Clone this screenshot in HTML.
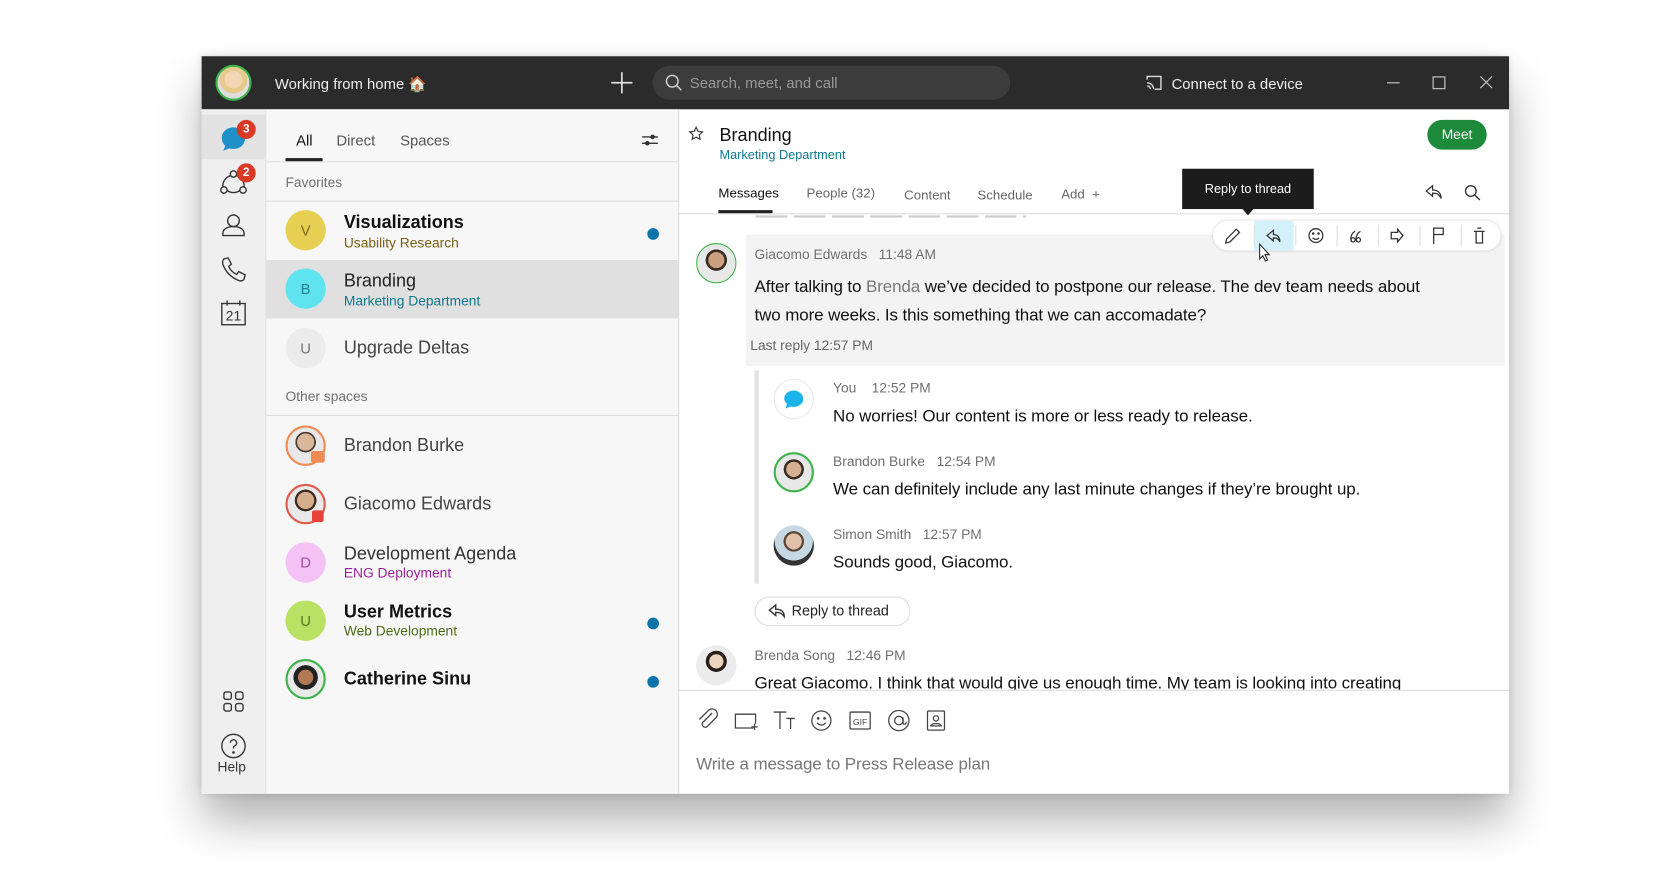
<!DOCTYPE html>
<html><head><meta charset="utf-8">
<style>
*{box-sizing:border-box;margin:0;padding:0}
html,body{width:1664px;height:880px;background:#fff;overflow:hidden;font-family:"Liberation Sans",sans-serif;color:#121212}
#w{position:absolute;left:0;top:0;width:1568px;height:830px;transform:scale(1.0612);transform-origin:0 0}
.a{position:absolute}
.win{left:190px;top:53px;width:1232px;height:695px;background:#fff;box-shadow:0 26px 40px rgba(0,0,0,.3),0 0 8px rgba(0,0,0,.14)}
.tb{left:190px;top:53px;width:1232px;height:50px;background:#2b2b2b}
.rail{left:190px;top:103px;width:61px;height:645px;background:#efefef;border-right:1px solid #e2e2e2}
.list{left:251px;top:103px;width:389px;height:645px;background:#f7f7f7;border-right:1px solid #ddd}
.av{width:38px;height:38px;border-radius:50%;text-align:center;line-height:38px;font-size:14px;color:#555}
.row{position:absolute;left:251px;width:388px;height:55px}
.nm{position:absolute;left:73px;font-size:17px;color:#222}
.sub{position:absolute;left:73px;font-size:13px}
.dot{position:absolute;left:359px;width:11px;height:11px;border-radius:50%;background:#0a73a8}
.g{color:#707070}
.m{font-size:16px;letter-spacing:-0.1px}
svg{position:absolute;overflow:visible}
</style></head><body><div id="w">
<div class="a win"></div>
<div class="a tb"></div>
<div class="a" style="left:203px;top:61px;width:34px;height:34px;border-radius:50%;border:2px solid #3cb44b;background:radial-gradient(circle at 50% 40%,#f3d7b5 0 35%,#e8c98c 36% 55%,#ddd 56%)"></div>
<div class="a" style="left:259px;top:71px;color:#eee;font-size:14px">Working from home 🏠</div>
<svg style="left:576px;top:68px" width="20" height="20"><path d="M10 0V20M0 10H20" stroke="#ddd" stroke-width="1.6"/></svg>
<div class="a" style="left:615px;top:62px;width:337px;height:32px;border-radius:16px;background:#3c3c3c"></div>
<svg style="left:627px;top:70px" width="16" height="16"><circle cx="6.5" cy="6.5" r="5.5" fill="none" stroke="#ccc" stroke-width="1.4"/><path d="M10.5 10.5L15 15" stroke="#ccc" stroke-width="1.4"/></svg>
<div class="a" style="left:650px;top:70px;color:#9a9a9a;font-size:14px">Search, meet, and call</div>
<svg style="left:1080px;top:71px" width="15" height="14"><path d="M1 4V1H14V13H8" fill="none" stroke="#ddd" stroke-width="1.3"/><path d="M1 7A6 6 0 0 1 7 13M1 10A3 3 0 0 1 4 13" fill="none" stroke="#ddd" stroke-width="1.3"/></svg>
<div class="a" style="left:1104px;top:71px;color:#eee;font-size:14px">Connect to a device</div>
<svg style="left:1306px;top:70px" width="110" height="16"><path d="M1 8H13" stroke="#bbb" stroke-width="1.2"/><rect x="44.5" y="2.5" width="11" height="11" fill="none" stroke="#bbb" stroke-width="1.2"/><path d="M89 2L100 13M100 2L89 13" stroke="#bbb" stroke-width="1.2"/></svg>
<div class="a rail"></div>
<div class="a" style="left:190px;top:108px;width:60px;height:42px;background:#e2e2e2"></div>
<svg style="left:207px;top:118px" width="26" height="26"><path d="M13 2C6.5 2 2 6.5 2 12c0 3 1.3 5.5 3.3 7.3L3.5 24l5.6-2.2c1.2.3 2.5.5 3.9.5 6.5 0 11-4.5 11-10.3S19.5 2 13 2z" fill="#1e8fc9"/></svg>
<div class="a" style="left:223px;top:113px;width:18px;height:18px;border-radius:50%;background:#d93a26;color:#fff;font-size:11px;font-weight:bold;text-align:center;line-height:18px">3</div>
<svg style="left:207px;top:160px" width="26" height="24" fill="none" stroke="#333" stroke-width="1.3"><circle cx="13" cy="4" r="3"/><circle cx="4" cy="19" r="3"/><circle cx="22" cy="19" r="3"/><path d="M10.5 5.5A10 10 0 0 0 3 16M7 19.5a10 10 0 0 0 12 0M15.5 5.5A10 10 0 0 1 23 16"/></svg>
<div class="a" style="left:223px;top:154px;width:18px;height:18px;border-radius:50%;background:#d93a26;color:#fff;font-size:11px;font-weight:bold;text-align:center;line-height:18px">2</div>
<svg style="left:209px;top:201px" width="22" height="22" fill="none" stroke="#333" stroke-width="1.3"><circle cx="11" cy="7" r="5.5"/><path d="M1 21v-2c0-4 4-6.5 10-6.5s10 2.5 10 6.5v2z"/></svg>
<svg style="left:208px;top:242px" width="24" height="24" fill="none" stroke="#333" stroke-width="1.3"><path d="M3 2l4-1 3 6-2.5 2c1.5 3.5 4 6 7.5 7.5L17 14l6 3-1 4c-1 1.5-3 2-5 1.3C10 19.5 4.5 14 2 7 1.5 5 2 3 3 2z"/></svg>
<svg style="left:208px;top:283px" width="24" height="24"><rect x="1" y="3" width="22" height="20" fill="none" stroke="#333" stroke-width="1.3"/><path d="M6 0V5M18 0V5" stroke="#333" stroke-width="1.3"/><text x="12" y="19" font-size="13" text-anchor="middle" font-family="Liberation Sans" fill="#333">21</text></svg>
<svg style="left:210px;top:651px" width="20" height="20" fill="none" stroke="#333" stroke-width="1.3"><rect x="1" y="1" width="7" height="7" rx="2"/><rect x="12" y="1" width="7" height="7" rx="2"/><rect x="1" y="12" width="7" height="7" rx="2"/><rect x="12" y="12" width="7" height="7" rx="2"/></svg>
<svg style="left:208px;top:691px" width="24" height="24" fill="none" stroke="#333" stroke-width="1.3"><circle cx="12" cy="12" r="11"/><path d="M9 9a3 3 0 1 1 4 3c-1 .5-1 1-1 2.5"/><circle cx="12" cy="18" r=".6" fill="#333"/></svg>
<div class="a" style="left:205px;top:715px;font-size:13px;color:#333">Help</div>
<div class="a list"></div>
<div class="a" style="left:279px;top:124px;font-size:14px;color:#111">All</div>
<div class="a" style="left:317px;top:124px;font-size:14px;color:#555">Direct</div>
<div class="a" style="left:377px;top:124px;font-size:14px;color:#555">Spaces</div>
<div class="a" style="left:269px;top:149px;width:35px;height:3px;background:#222"></div>
<div class="a" style="left:251px;top:152px;width:388px;height:1px;background:#ddd"></div>
<svg style="left:605px;top:126px" width="15" height="12" stroke="#333" stroke-width="1.3"><path d="M0 3H15M0 9H15"/><circle cx="10" cy="3" r="1.5" fill="#333"/><circle cx="5" cy="9" r="1.5" fill="#333"/></svg>
<div class="a g" style="left:269px;top:164px;font-size:13px">Favorites</div>
<div class="a" style="left:251px;top:189px;width:388px;height:1px;background:#ddd"></div>
<div class="row" style="top:190px"><div class="a av" style="left:18px;top:8px;background:#e6cf52;color:#7a6a20">V</div><div class="nm" style="top:10px;font-weight:bold;color:#111">Visualizations</div><div class="sub" style="top:31px;color:#7a5e13">Usability Research</div><div class="dot" style="top:25px"></div></div>
<div class="row" style="top:245px;background:#e0e0e0"><div class="a av" style="left:18px;top:8px;background:#5fe3ef;color:#2a7e88">B</div><div class="nm" style="top:10px">Branding</div><div class="sub" style="top:31px;color:#0b7a8c">Marketing Department</div></div>
<div class="row" style="top:300px"><div class="a av" style="left:18px;top:9px;background:#ececec;color:#777">U</div><div class="nm" style="top:18px;color:#444">Upgrade Deltas</div></div>
<div class="a g" style="left:269px;top:366px;font-size:13px">Other spaces</div>
<div class="a" style="left:251px;top:391px;width:388px;height:1px;background:#ddd"></div>
<div class="row" style="top:392px"><div class="a av" style="left:18px;top:9px;border:2px solid #f08a54;background:radial-gradient(circle at 50% 40%,#d8b79a 0 30%,#4a3a30 31% 36%,#e9e9e9 37%)"></div><div class="a" style="left:42px;top:33px;width:13px;height:11px;background:#f08a54;border-radius:2px"></div><div class="nm" style="top:18px;color:#444">Brandon Burke</div></div>
<div class="row" style="top:447px"><div class="a av" style="left:18px;top:9px;border:2px solid #e05a4a;background:radial-gradient(circle at 50% 40%,#d6ae8e 0 30%,#3a2a20 31% 38%,#e9e9e9 39%)"></div><div class="a" style="left:43px;top:34px;width:11px;height:11px;background:#e8433a;border-radius:2px"></div><div class="nm" style="top:18px;color:#444">Giacomo Edwards</div></div>
<div class="row" style="top:502px"><div class="a av" style="left:18px;top:9px;background:#f4c2f4;color:#a050a0">D</div><div class="nm" style="top:10px;color:#333">Development Agenda</div><div class="sub" style="top:30px;color:#9b1f9b">ENG Deployment</div></div>
<div class="row" style="top:557px"><div class="a av" style="left:18px;top:9px;background:#b9e163;color:#5c7a20">U</div><div class="nm" style="top:10px;font-weight:bold;color:#111">User Metrics</div><div class="sub" style="top:30px;color:#4f6a17">Web Development</div><div class="dot" style="top:25px"></div></div>
<div class="row" style="top:612px"><div class="a av" style="left:18px;top:9px;border:2px solid #3cb44b;background:radial-gradient(circle at 50% 45%,#b07a55 0 28%,#222 29% 45%,#e9e9e9 46%)"></div><div class="nm" style="top:18px;font-weight:bold;color:#111">Catherine Sinu</div><div class="dot" style="top:25px"></div></div>
<svg style="left:649px;top:119px" width="14" height="14"><path d="M7 1l1.8 3.8 4.2.5-3.1 2.9.8 4.1L7 10.3 3.3 12.3l.8-4.1L1 5.3l4.2-.5z" fill="none" stroke="#333" stroke-width="1.1"/></svg>
<div class="a" style="left:678px;top:118px;font-size:17px;color:#111">Branding</div>
<div class="a" style="left:678px;top:139px;font-size:12px;color:#0b7a8c">Marketing Department</div>
<div class="a" style="left:1345px;top:113px;width:56px;height:28px;border-radius:14px;background:#1d8a3b;color:#fff;font-size:13px;text-align:center;line-height:28px">Meet</div>
<div class="a" style="left:677px;top:175px;font-size:12.5px;color:#111">Messages</div>
<div class="a" style="left:760px;top:175px;font-size:12.5px;color:#666">People (32)</div>
<div class="a" style="left:852px;top:177px;font-size:12.5px;color:#666">Content</div>
<div class="a" style="left:921px;top:177px;font-size:12.5px;color:#666">Schedule</div>
<div class="a" style="left:1000px;top:176px;font-size:12.5px;color:#666">Add &nbsp;+</div>
<div class="a" style="left:677px;top:198px;width:51px;height:3px;background:#222"></div>
<div class="a" style="left:640px;top:201px;width:782px;height:1px;background:#ddd"></div>
<svg style="left:1343px;top:174px" width="16" height="15" fill="none" stroke="#333" stroke-width="1.2"><path d="M7 1L1 6l6 5V8c4 0 6 1 8 5 0-5-3-8-8-8z"/></svg>
<svg style="left:1380px;top:174px" width="15" height="15" fill="none" stroke="#333" stroke-width="1.3"><circle cx="6" cy="6" r="5"/><path d="M10 10l4.5 4.5"/></svg>
<div class="a" style="left:1114px;top:159px;width:124px;height:38px;background:#1c1c1c;color:#fff;font-size:12px;text-align:center;line-height:38px">Reply to thread</div>
<div class="a" style="left:1170px;top:196px;border-left:6px solid transparent;border-right:6px solid transparent;border-top:7px solid #1c1c1c;width:0;height:0"></div>
<div class="a" style="left:712px;top:203px;width:255px;height:2px;background:repeating-linear-gradient(90deg,#ccc 0 30px,transparent 30px 36px)"></div>
<div class="a" style="left:703px;top:221px;width:715px;height:124px;background:#f3f3f3"></div>
<div class="a av" style="left:656px;top:229px;border:1.5px solid #3cb44b;background:radial-gradient(circle at 50% 42%,#caa080 0 27%,#3b2c22 28% 36%,#e8e8e8 37%)"></div>
<div class="a" style="left:711px;top:232px;font-size:13px;color:#707070">Giacomo Edwards&nbsp;&nbsp;&nbsp;11:48 AM</div>
<div class="a m" style="left:711px;top:257px;line-height:27px;color:#111;width:655px">After talking to <span style="color:#777">Brenda</span> we’ve decided to postpone our release. The dev team needs about two more weeks. Is this something that we can accomadate?</div>
<div class="a" style="left:707px;top:318px;font-size:13px;color:#666">Last reply 12:57 PM</div>
<div class="a" style="left:1143px;top:208px;width:271px;height:28px;background:#fff;border-radius:14px;box-shadow:0 0 3px rgba(0,0,0,.2)"></div>
<div class="a" style="left:1182px;top:208px;width:37px;height:28px;background:#d4f1fb"></div>
<svg style="left:1143px;top:208px" width="271" height="28" fill="none" stroke="#333" stroke-width="1.2">
<path d="M39 4V24M78 4V24M117 4V24M156 4V24M195 4V24M234 4V24" stroke="#e3e3e3"/>
<path d="M12 21l1-4 9-9 3 3-9 9z"/>
<path d="M57 9l-6 5 6 5v-3c3 0 5 1 6 4 0-4-2-7-6-7z"/>
<circle cx="97" cy="14" r="6.5"/><circle cx="94.5" cy="12" r=".6" fill="#333"/><circle cx="99.5" cy="12" r=".6" fill="#333"/><path d="M94 16a3.5 3 0 0 0 6 0"/>
<path d="M131 20c-2-3-1-8 3-10M136 20c-2-3-1-8 3-10"/><circle cx="132" cy="18" r="2"/><circle cx="137" cy="18" r="2"/>
<path d="M168 11h6V8l5 6-5 6v-3h-6z"/>
<path d="M208 22V7h9v6h-9"/>
<path d="M246 10h10M248 10v11h6V10M249 7h4"/>
</svg>
<svg style="left:1186px;top:229px" width="12" height="18"><path d="M1 1v14l3-3 2.5 5 2-1-2.5-5h4z" fill="#fff" stroke="#222" stroke-width="1"/></svg>
<div class="a" style="left:711px;top:349px;width:4px;height:201px;background:#e3e3e3"></div>
<div class="a av" style="left:729px;top:357px;background:#fff;border:1px solid #e8e8e8"></div>
<svg style="left:738px;top:367px" width="20" height="19"><path d="M10 1C5 1 1 4.5 1 8.5c0 2 1 3.8 2.5 5L2.5 18l4.5-2c1 .3 2 .4 3 .4 5 0 9-3.3 9-7.4S15 1 10 1z" fill="#1ab4ea"/></svg>
<div class="a" style="left:785px;top:358px;font-size:13px;color:#707070">You&nbsp;&nbsp;&nbsp;&nbsp;12:52 PM</div>
<div class="a m" style="left:785px;top:384px">No worries! Our content is more or less ready to release.</div>
<div class="a av" style="left:729px;top:426px;border:2px solid #3cb44b;background:radial-gradient(circle at 50% 42%,#d6b090 0 27%,#3b2c22 28% 36%,#e8e8e8 37%)"></div>
<div class="a" style="left:785px;top:427px;font-size:13px;color:#707070">Brandon Burke&nbsp;&nbsp;&nbsp;12:54 PM</div>
<div class="a m" style="left:785px;top:453px">We can definitely include any last minute changes if they’re brought up.</div>
<div class="a av" style="left:729px;top:495px;background:radial-gradient(circle at 50% 40%,#e0c0a8 0 25%,#5a4434 26% 32%,#c6d8e4 33% 60%,#333 61%)"></div>
<div class="a" style="left:785px;top:496px;font-size:13px;color:#707070">Simon Smith&nbsp;&nbsp;&nbsp;12:57 PM</div>
<div class="a m" style="left:785px;top:522px">Sounds good, Giacomo.</div>
<div class="a" style="left:711px;top:562px;width:147px;height:28px;border:1px solid #ddd;border-radius:14px;background:#fff"></div>
<svg style="left:724px;top:568px" width="16" height="15" fill="none" stroke="#333" stroke-width="1.3"><path d="M7 2L1 7l6 5V9c4 0 6 1 8 4 0-5-3-7-8-7z"/></svg>
<div class="a" style="left:746px;top:568px;font-size:13.5px;color:#222">Reply to thread</div>
<div class="a av" style="left:656px;top:608px;background:radial-gradient(circle at 50% 40%,#edd2bd 0 22%,#2a1f1a 23% 33%,#ececec 34%)"></div>
<div class="a" style="left:711px;top:610px;font-size:13px;color:#707070">Brenda Song&nbsp;&nbsp;&nbsp;12:46 PM</div>
<div class="a m" style="left:711px;top:636px;width:700px;height:14px;overflow:hidden;white-space:nowrap">Great Giacomo. I think that would give us enough time. My team is looking into creating</div>
<div class="a" style="left:640px;top:650px;width:782px;height:1px;background:#ddd"></div>
<svg style="left:656px;top:668px" width="240" height="22" fill="none" stroke="#444" stroke-width="1.2">
<path d="M15 4l-9 9a3 3 0 0 0 4 4l9-9a5 5 0 0 0-7-7l-9 9"/>
<path d="M54 18H37V5h19v9M52 17h6M55 14v6"/>
<path d="M73 3h12M79 3v16M85 9h8M89 9v10"/>
<circle cx="118" cy="11" r="9"/><circle cx="115" cy="9" r=".7" fill="#444"/><circle cx="121" cy="9" r=".7" fill="#444"/><path d="M114 13a4.5 4 0 0 0 8 0"/>
<rect x="145" y="3" width="19" height="16" rx="1"/><text x="154.5" y="15" font-size="8" text-anchor="middle" fill="#444" stroke="none" font-family="Liberation Sans">GIF</text>
<circle cx="191" cy="11" r="9.5"/><circle cx="191" cy="11" r="4"/><path d="M195 8v5c0 2 3 2 3-1"/>
<rect x="218" y="2" width="16" height="18" rx="1"/><circle cx="226" cy="9" r="2.5"/><path d="M221 16c1-3 9-3 10 0z"/>
</svg>
<div class="a m" style="left:656px;top:712px;color:#777">Write a message to Press Release plan</div>
</div></body></html>
